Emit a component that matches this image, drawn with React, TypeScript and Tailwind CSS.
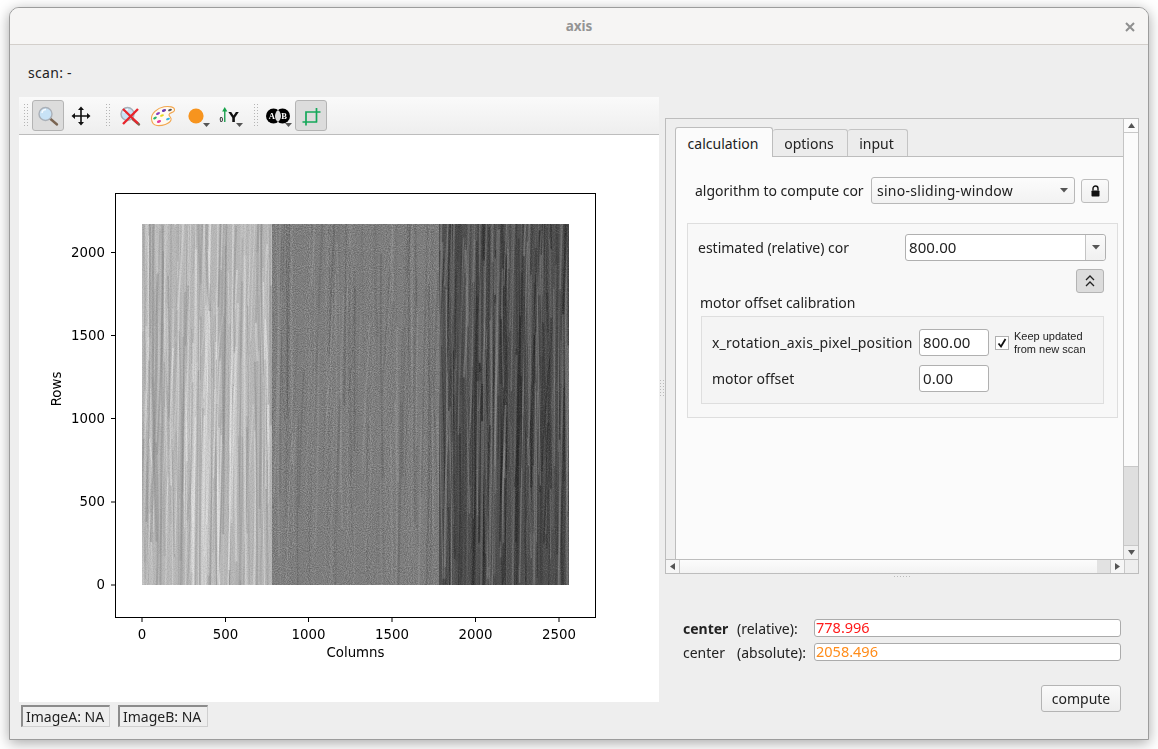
import React from "react";

function rng(seed: number) {
  return () => {
    seed |= 0;
    seed = (seed + 0x6d2b79f5) | 0;
    let t = Math.imul(seed ^ (seed >>> 15), 1 | seed);
    t = (t + Math.imul(t ^ (t >>> 7), 61 | t)) ^ t;
    return ((t ^ (t >>> 14)) >>> 0) / 4294967296;
  };
}

type Streak = { d: string; w: number; c: string; o: number };

function makeStreaks(x0: number, x1: number, n: number, seed: number, light: string, dark: string, amp: number, bias: number) {
  const r = rng(seed);
  const out: Streak[] = [];
  for (let i = 0; i < n; i++) {
    const x = x0 + r() * (x1 - x0);
    const y = 224 + r() * 340 - 120;
    const len = 90 + r() * 300;
    const tilt = (r() - 0.3) * 12;
    const bend = (r() - 0.5) * 10;
    out.push({
      d: `M${x.toFixed(1)} ${y.toFixed(1)}Q${(x - tilt / 2 + bend).toFixed(1)} ${(y + len / 2).toFixed(1)} ${(x - tilt).toFixed(1)} ${(y + len).toFixed(1)}`,
      w: 0.8 + r() * 1.6,
      c: r() < bias ? light : dark,
      o: amp * (0.2 + r() * 0.8),
    });
  }
  return out;
}

const BANDS = [
  { x: 142, w: 130, fill: "#b9b9b9", noise: 0.12, s: makeStreaks(142, 272, 200, 11, "#ececec", "#8c8c8c", 0.55, 0.5) },
  { x: 272, w: 167, fill: "#7e7e7e", noise: 0.3, s: makeStreaks(272, 439, 110, 23, "#a4a4a4", "#555555", 0.38, 0.5) },
  { x: 439, w: 130, fill: "#4e4e4e", noise: 0.18, s: makeStreaks(439, 569, 210, 37, "#8a8a8a", "#222222", 0.6, 0.5) },
];

const XT = [[0, 142], [500, 225.5], [1000, 308.5], [1500, 392], [2000, 475.5], [2500, 559]] as const;
const YT = [[0, 585], [500, 502], [1000, 418.5], [1500, 335.5], [2000, 252.5]] as const;

function Chart() {
  return (
    <svg width="640" height="567" viewBox="19 135 640 567" className="block">
      <defs>
        <filter id="soft" x="0" y="0" width="100%" height="100%">
          <feGaussianBlur stdDeviation="0.45 0" />
        </filter>
        <filter id="noiseW" x="0" y="0" width="100%" height="100%">
          <feTurbulence type="fractalNoise" baseFrequency="0.95" numOctaves="1" seed="4" />
          <feColorMatrix type="matrix" values="0 0 0 0 1  0 0 0 0 1  0 0 0 0 1  1.8 0 0 0 -0.75" />
        </filter>
        <filter id="noiseB" x="0" y="0" width="100%" height="100%">
          <feTurbulence type="fractalNoise" baseFrequency="0.95" numOctaves="1" seed="9" />
          <feColorMatrix type="matrix" values="0 0 0 0 0  0 0 0 0 0  0 0 0 0 0  0 1.8 0 0 -0.75" />
        </filter>
      </defs>
      <rect x="19" y="135" width="640" height="567" fill="#fff" />
      {BANDS.map((b, i) => (
        <svg key={i} x={b.x} y="224" width={b.w} height="361" viewBox={`${b.x} 224 ${b.w} 361`}>
          <rect x={b.x} y="224" width={b.w} height="361" fill={b.fill} />
          <g filter="url(#soft)">
            {b.s.map((s, j) => (
              <path key={j} d={s.d} fill="none" stroke={s.c} strokeWidth={s.w} opacity={s.o} />
            ))}
          </g>
          <rect x={b.x} y="224" width={b.w} height="361" filter="url(#noiseW)" opacity={b.noise} />
          <rect x={b.x} y="224" width={b.w} height="361" filter="url(#noiseB)" opacity={b.noise} />
        </svg>
      ))}
      <rect x="115.5" y="193.5" width="480" height="424" fill="none" stroke="#000" strokeWidth="1" />
      <g fontFamily="'DejaVu Sans', sans-serif" fontSize="13.33" fill="#000">
        {XT.map(([v, x]) => (
          <g key={v}>
            <line x1={x} x2={x} y1="618" y2="622" stroke="#000" />
            <text x={x} y="639" textAnchor="middle">{v}</text>
          </g>
        ))}
        {YT.map(([v, y]) => (
          <g key={v}>
            <line x1="111" x2="115" y1={y} y2={y} stroke="#000" />
            <text x="105" y={y + 4} textAnchor="end">{v}</text>
          </g>
        ))}
        <text x="355.5" y="657" textAnchor="middle">Columns</text>
        <text transform="translate(61 389) rotate(-90)" textAnchor="middle">Rows</text>
      </g>
    </svg>
  );
}

function Grip({ first }: { first?: boolean }) {
  return (
    <svg width="5" height="24" viewBox="0 0 5 24" className={first ? "mr-[2px]" : "ml-[8px] mr-[2px]"}>
      {[0, 1, 2, 3, 4, 5, 6, 7].map((i) => (
        <g key={i} fill="#b5b5b5">
          <rect x="0" y={i * 3} width="1" height="1" />
          <rect x="3" y={i * 3} width="1" height="1" />
        </g>
      ))}
    </svg>
  );
}

function ToolBtn({ active, children, menu }: { active?: boolean; children: React.ReactNode; menu?: boolean }) {
  return (
    <div
      className={
        "relative flex h-[31px] w-[32px] items-center justify-center rounded-[3px] border " +
        (active ? "border-[#b4b4b4] bg-[#dcdcdc]" : "border-transparent")
      }
    >
      {children}
      {menu && (
        <svg width="7" height="4" viewBox="0 0 7 4" className="absolute bottom-[3px] right-[1px]">
          <path d="M0 0h7L3.500 4z" fill="#555" />
        </svg>
      )}
    </div>
  );
}

function Lens() {
  return (
    <g>
      <path d="M14 14.500l7 6" stroke="#7a6552" strokeWidth="2.400" strokeLinecap="round" />
      <circle cx="9.500" cy="10" r="6.500" fill="#c8e2f6" stroke="#aab0b8" strokeWidth="1.400" />
      <path d="M6 9a4 4 0 0 1 4-3.500" stroke="#f4faff" strokeWidth="1.500" fill="none" />
    </g>
  );
}

function ZoomIcon() {
  return (
    <svg width="24" height="24" viewBox="0 0 24 24">
      <Lens />
    </svg>
  );
}

function MoveIcon() {
  return (
    <svg width="20" height="20" viewBox="0 0 20 20" fill="#111">
      <path d="M9.200 3h1.600v14H9.200zM3 9.200h14v1.600H3z" />
      <path d="M10 0.500l3 3.500H7zM10 19.500L7 16h6zM0.500 10L4 7v6zM19.500 10L16 13V7z" />
    </svg>
  );
}

function ResetIcon() {
  return (
    <svg width="24" height="24" viewBox="0 0 24 24">
      <Lens />
      <path d="M5 5l15 14.500M20 5L5 20" stroke="#e8252c" strokeWidth="2.400" />
    </svg>
  );
}

function PaletteIcon() {
  return (
    <svg width="26" height="22" viewBox="0 0 26 22">
      <path
        d="M1.500 14C1 9 7 3 14 1.800c5-.9 11 0 10.500 3.500-.4 2.600-5 2-5.500 4.200-.5 2 3 2.500 2 5.500C19.500 19 12 21 7 20.500 3.500 20 1.800 17.500 1.500 14z"
        fill="#fffaf2"
        stroke="#f2a64e"
        strokeWidth="1.100"
      />
      <g>
        <ellipse cx="8" cy="8.500" rx="2.200" ry="1.200" fill="#8a3fc0" transform="rotate(-30 8 8.500)" />
        <ellipse cx="14" cy="5.500" rx="2.200" ry="1.200" fill="#6a3ab0" transform="rotate(-20 14 5.500)" />
        <ellipse cx="20" cy="5" rx="2" ry="1.100" fill="#555" transform="rotate(-20 20 5)" />
        <ellipse cx="5" cy="13" rx="2" ry="1.100" fill="#27b36a" transform="rotate(-30 5 13)" />
        <ellipse cx="12" cy="10.500" rx="2" ry="1.100" fill="#e6d820" transform="rotate(-20 12 10.500)" />
        <ellipse cx="18" cy="14" rx="2" ry="1.100" fill="#33b8e0" transform="rotate(-20 18 14)" />
        <ellipse cx="9" cy="16.500" rx="2.200" ry="1.200" fill="#e23a9a" transform="rotate(-20 9 16.500)" />
      </g>
    </svg>
  );
}

function OrangeDot() {
  return (
    <svg width="24" height="24" viewBox="0 0 24 24">
      <circle cx="12" cy="12" r="7.600" fill="#f7941e" />
    </svg>
  );
}

function YIcon() {
  return (
    <svg width="26" height="24" viewBox="0 0 26 24">
      <text x="3.500" y="17.500" fontSize="6.500" fontWeight="700" fontFamily="'Liberation Sans', sans-serif" fill="#222">0</text>
      <path d="M8 18h1.500V7H8z" fill="#2aa35a" />
      <path d="M8.750 3l2.600 4.500h-5.200z" fill="#16a34a" />
      <text x="12.500" y="18" fontSize="14" fontWeight="700" fontFamily="'DejaVu Sans', sans-serif" fill="#111">Y</text>
    </svg>
  );
}

function ABIcon() {
  return (
    <svg width="26" height="20" viewBox="0 0 26 20">
      <circle cx="8.500" cy="10" r="7.500" fill="#000" />
      <circle cx="17.500" cy="10" r="7.500" fill="#000" />
      <path d="M13 4a7.500 7.500 0 0 1 0 12a7.500 7.500 0 0 1 0-12z" fill="#dcdcdc" />
      <text x="6.800" y="13" fontSize="8.500" textAnchor="middle" fontWeight="700" fontFamily="'Liberation Serif', serif" fill="#fff">A</text>
      <text x="19.200" y="13" fontSize="8.500" textAnchor="middle" fontWeight="700" fontFamily="'Liberation Serif', serif" fill="#fff">B</text>
    </svg>
  );
}

function CropIcon() {
  return (
    <svg width="20" height="20" viewBox="0 0 20 20" fill="none" stroke="#14a85a" strokeWidth="1.700">
      <path d="M5 6H19.500M15.500 2V16.500M5 5.200V19.500M1.500 16H16" />
    </svg>
  );
}

function Toolbar() {
  return (
    <div className="flex h-[38px] items-center gap-px border-b border-[#bdbdbd] bg-gradient-to-b from-[#fafafa] to-[#eeeeee] pl-[5px]">
      <Grip first />
      <ToolBtn active><ZoomIcon /></ToolBtn>
      <ToolBtn><MoveIcon /></ToolBtn>
      <Grip />
      <ToolBtn><ResetIcon /></ToolBtn>
      <ToolBtn><PaletteIcon /></ToolBtn>
      <ToolBtn menu><OrangeDot /></ToolBtn>
      <ToolBtn menu><YIcon /></ToolBtn>
      <Grip />
      <ToolBtn menu><ABIcon /></ToolBtn>
      <ToolBtn active><CropIcon /></ToolBtn>
    </div>
  );
}

function Sunken({ w, children }: { w: string; children: React.ReactNode }) {
  return (
    <div className={w + " flex h-[22px] items-center border border-b-[#cfcfcf] border-l-2 border-l-[#8c8c8c] border-r-[#cfcfcf] border-t-2 border-t-[#8c8c8c] pl-[3px] text-[14px] leading-none text-[#222]"}>
      {children}
    </div>
  );
}

function Arrow({ d }: { d: string }) {
  return (
    <svg width="9" height="9" viewBox="0 0 9 9">
      <path d={d} fill="#555" />
    </svg>
  );
}

function Input({ w, v }: { w: string; v: string }) {
  return (
    <div className={w + " flex h-[27px] shrink-0 items-center rounded-[3px] border border-[#b0b0b0] bg-white pl-[3px] text-[15px] tracking-[0.1px] text-[#222]"}>
      {v}
    </div>
  );
}

function Tabs() {
  return (
    <div className="flex h-[29px] items-end border-b border-[#bdbdbd]">
      <div className="relative -mb-px flex h-[30px] w-[98px] items-center justify-center rounded-t-[3px] border border-b-0 border-[#bdbdbd] bg-[#fbfbfb] pr-[2px] pt-[1px] text-[14px] text-[#222]">calculation</div>
      <div className="flex h-[27px] w-[75px] items-center justify-center rounded-t-[3px] border border-l-0 border-b-0 border-[#c4c4c4] bg-[#ececec] pr-[2px] pt-[1px] text-[14px] text-[#222]">options</div>
      <div className="flex h-[27px] w-[60px] items-center justify-center rounded-t-[3px] border border-l-0 border-b-0 border-[#c4c4c4] bg-[#ececec] pr-[2px] pt-[1px] text-[14px] text-[#222]">input</div>
    </div>
  );
}

function CalcPane() {
  return (
    <div className="min-h-0 flex-1 overflow-hidden border-l border-[#bdbdbd] bg-[#fbfbfb] pt-[20px] text-[14px] text-[#222]">
      <div className="flex items-center pl-[19px]">
        <div className="w-[176px] shrink-0">algorithm to compute cor</div>
        <div className="flex h-[27px] w-[204px] shrink-0 items-center justify-between rounded-[3px] border border-[#b8b8b8] bg-gradient-to-b from-[#fcfcfc] to-[#f2f2f2] pl-[5px] pr-[6px]">
          <span className="tracking-[0.27px]">sino-sliding-window</span>
          <svg width="8" height="5" viewBox="0 0 8 5"><path d="M0 0h8L4 4.500z" fill="#555" /></svg>
        </div>
        <div className="ml-[6px] flex h-[24px] w-[28px] items-center justify-center rounded-[3px] border border-[#bdbdbd] bg-gradient-to-b from-[#fafafa] to-[#f0f0f0]">
          <svg width="9" height="12" viewBox="0 0 9 12">
            <path d="M2 5.500V3.500a2.500 2.500 0 0 1 5 0v2" fill="none" stroke="#111" strokeWidth="1.400" />
            <rect x="0.500" y="5.500" width="8" height="6" rx="0.800" fill="#111" />
          </svg>
        </div>
      </div>

      <div className="ml-[11px] mt-[19px] h-[195px] w-[431px] border border-[#dedede] bg-[#f8f8f8]">
        <div className="flex items-center pl-[10px] pt-[10px]">
          <div className="w-[207px] shrink-0">estimated (relative) cor</div>
          <div className="flex h-[27px] w-[201px] shrink-0 items-center justify-between rounded-[3px] border border-[#b0b0b0] bg-white pl-[3px] text-[15px] tracking-[0.1px]">
            <span>800.00</span>
            <div className="flex h-full w-[20px] items-center justify-center rounded-r-[3px] border-l border-[#c4c4c4] bg-gradient-to-b from-[#fafafa] to-[#f0f0f0]">
              <svg width="8" height="5" viewBox="0 0 8 5"><path d="M0 0h8L4 4.500z" fill="#555" /></svg>
            </div>
          </div>
        </div>
        <div className="ml-[388px] mt-[8px] flex h-[24px] w-[28px] items-center justify-center rounded-[3px] border border-[#b4b4b4] bg-[#dcdcdc]">
          <svg width="12" height="14" viewBox="0 0 12 14" fill="none" stroke="#222" strokeWidth="1.300">
            <path d="M2 6l4-4 4 4M2 12l4-4 4 4" />
          </svg>
        </div>
        <div className="h-[20px] pl-[12px] leading-[20px]">motor offset calibration</div>
        <div className="ml-[13px] mt-[3px] h-[88px] w-[403px] border border-[#dedede] bg-[#f4f4f4] pl-[10px] pt-[12px]">
          <div className="flex items-center">
            <div className="w-[207px] shrink-0 tracking-[0.2px]">x_rotation_axis_pixel_position</div>
            <Input w="w-[70px]" v="800.00" />
            <div className="ml-[6px] flex h-[14px] w-[14px] shrink-0 items-center justify-center border border-[#b0b0b0] bg-white">
              <svg width="10" height="10" viewBox="0 0 10 10" fill="none" stroke="#111" strokeWidth="1.800">
                <path d="M1.500 5.500l2.500 3L8.500 1" />
              </svg>
            </div>
            <div className="ml-[5px] font-['Liberation_Sans',sans-serif] text-[11px] leading-[13px]">
              Keep updated
              <br />
              from new scan
            </div>
          </div>
          <div className="mt-[9px] flex items-center">
            <div className="w-[207px] shrink-0">motor offset</div>
            <Input w="w-[70px]" v="0.00" />
          </div>
        </div>
      </div>
    </div>
  );
}

function ScrollArea() {
  return (
    <div className="flex h-[456px] w-[474px] flex-col border border-[#bdbdbd]">
      <div className="flex min-h-0 flex-1">
        <div className="flex min-w-0 flex-1 flex-col bg-[#eeeeee] pl-[9px] pt-[9px]">
          <Tabs />
          <CalcPane />
        </div>
        <div className="flex w-[15px] flex-col border-l border-[#c4c4c4] bg-[#dfdfdf]">
          <div className="flex h-[14px] items-center justify-center border-b border-[#c8c8c8] bg-[#fbfbfb]">
            <Arrow d="M4.500 2L8 7H1z" />
          </div>
          <div className="h-[334px] border-b border-[#c8c8c8] bg-[#fbfbfb]" />
          <div className="flex-1" />
          <div className="flex h-[14px] items-center justify-center border-t border-[#c8c8c8] bg-[#f0f0f0]">
            <Arrow d="M4.500 7L1 2h7z" />
          </div>
        </div>
      </div>
      <div className="flex h-[14px] border-t border-[#bdbdbd] bg-[#e2e2e2]">
        <div className="flex w-[14px] items-center justify-center border-r border-[#c8c8c8] bg-[#f6f6f6]">
          <Arrow d="M2 4.500L7 1v7z" />
        </div>
        <div className="w-[417px] bg-gradient-to-b from-[#fcfcfc] to-[#f3f3f3]" />
        <div className="flex-1" />
        <div className="flex w-[14px] items-center justify-center border-l border-[#c8c8c8] bg-[#f6f6f6]">
          <Arrow d="M7 4.500L2 1v7z" />
        </div>
        <div className="w-[14px] border-l border-[#c8c8c8] bg-[#eeeeee]" />
      </div>
    </div>
  );
}

function CenterRow({ bold, side, v, color }: { bold?: boolean; side: string; v: string; color: string }) {
  return (
    <div className="flex h-[18px] items-center text-[14px] text-[#222]">
      <div className={"w-[54px] shrink-0 " + (bold ? "font-bold" : "")}>center</div>
      <div className="w-[77px] shrink-0">{side}</div>
      <div className={color + " flex h-[18px] w-[307px] shrink-0 items-center rounded-[3px] border border-[#ababab] bg-white pl-[1px] text-[14.5px]"}>{v}</div>
    </div>
  );
}

export default function App() {
  return (
    <div className="h-[749px] w-[1158px] overflow-hidden bg-white pl-[9px] pt-[7px] font-['Noto_Sans',sans-serif]">
      <div className="flex h-[733px] w-[1140px] flex-col overflow-hidden rounded-t-[10px] border border-[#9c9c9c] bg-[#eeeeee] shadow-[0_3px_14px_rgba(0,0,0,0.35)]">
        <div className="relative flex h-[37px] shrink-0 items-center justify-center border-b border-[#d3cfcb] bg-[#f6f5f4] text-[13.5px] font-bold text-[#949494]">
          axis
          <svg width="10" height="10" viewBox="0 0 10 10" className="absolute right-[13px] top-[14px]" stroke="#8f8f8f" strokeWidth="2">
            <path d="M1 1l8 8M9 1l-8 8" />
          </svg>
        </div>
        <div className="flex h-[52px] shrink-0 items-center pl-[18px] pt-[2px] text-[14px] tracking-[0.3px] text-[#222]">scan: -</div>
        <div className="flex min-h-0 flex-1">
          <div className="ml-[9px] flex w-[640px] shrink-0 flex-col">
            <Toolbar />
            <Chart />
            <div className="flex gap-[8px] pl-[2px] pt-[3px]">
              <Sunken w="w-[89px]">ImageA: NA</Sunken>
              <Sunken w="w-[90px]">ImageB: NA</Sunken>
            </div>
          </div>
          <div className="relative flex w-[6px] shrink-0 items-center justify-center">
            <svg width="4" height="18" viewBox="0 0 4 18" className="-mt-[58px]">
              {[0, 1, 2, 3, 4, 5].map((i) => (
                <g key={i} fill="#bbb">
                  <rect x="0" y={i * 3} width="1" height="1" />
                  <rect x="3" y={i * 3} width="1" height="1" />
                </g>
              ))}
            </svg>
          </div>
          <div className="w-[474px] shrink-0 pt-[21px]">
            <ScrollArea />
            <div className="flex h-[5px] items-center justify-center">
              <svg width="16" height="1" viewBox="0 0 16 1">
                {[0, 1, 2, 3, 4, 5].map((i) => (
                  <rect key={i} x={i * 3} y="0" width="1" height="1" fill="#bbb" />
                ))}
              </svg>
            </div>
            <div className="flex flex-col gap-[6px] pl-[18px] pt-[40px]">
              <CenterRow bold side="(relative):" v="778.996" color="text-[#ff1a1a]" />
              <CenterRow side="(absolute):" v="2058.496" color="text-[#ff8c1a]" />
            </div>
            <div className="ml-[376px] mt-[24px] flex h-[27px] w-[80px] items-center justify-center rounded-[3px] border border-[#b4b4b4] bg-gradient-to-b from-[#fafafa] to-[#eeeeee] text-[14px] text-[#222]">
              compute
            </div>
          </div>
        </div>
      </div>
    </div>
  );
}
